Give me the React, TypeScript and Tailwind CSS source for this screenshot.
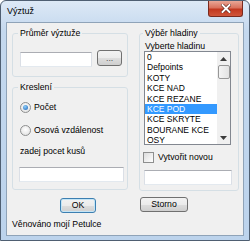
import type { ReactNode } from "react"

const layers = ["0", "Defpoints", "KOTY", "KCE NAD", "KCE REZANE", "KCE POD", "KCE SKRYTE", "BOURANE KCE", "OSY"]

function GroupBox({ title, className, children }: { title: string; className: string; children: ReactNode }) {
	return (
		<fieldset className={`border border-[#d5dfe5] rounded-[3px] min-w-0 ${className}`}>
			<legend className="px-[2px] leading-[10px]">{title}</legend>
			{children}
		</fieldset>
	)
}

function TextBox({ className }: { className: string }) {
	return <div className={`h-[15px] bg-white border border-t-[#abadb3] border-x-[#dbdfe6] border-b-[#e3e9ef] ${className}`} />
}

function Button({ label, className }: { label: string; className: string }) {
	return (
		<div
			className={`h-[15px] rounded-[3px] border flex items-center justify-center leading-none bg-[linear-gradient(#f2f2f2_0%,#ebebeb_50%,#dddddd_51%,#cfcfcf_100%)] ${className}`}
		>
			{label}
		</div>
	)
}

function Radio({ checked }: { checked?: boolean }) {
	return (
		<span className="w-[11px] h-[11px] rounded-full border border-[#8e8f8f] bg-[radial-gradient(circle_at_50%_40%,#ffffff,#dcdcdc)] flex items-center justify-center shrink-0">
			{checked && <span className="w-[5px] h-[5px] rounded-full bg-[radial-gradient(circle_at_40%_35%,#8fd0fa,#1a5fb4)]" />}
		</span>
	)
}

function Arrow({ down }: { down?: boolean }) {
	return (
		<div className="h-[13px] w-full flex items-center justify-center">
			<svg width="7" height="4" viewBox="0 0 7 4">
				<path d={down ? "M0 0 L7 0 L3.5 4Z" : "M0 4 L7 4 L3.5 0Z"} fill="#3c3c3c" />
			</svg>
		</div>
	)
}

export default function App() {
	return (
		<div className="w-[250px] h-[241px] flex flex-col border border-[#4f5f72] rounded-t-[6px] bg-[linear-gradient(#dde9f6,#c4d8ee_30px,#bcd3ec)] font-['Liberation_Sans',Arial,sans-serif] text-[8.7px] text-black overflow-hidden">
			<div className="h-[21px] flex justify-between shrink-0">
				<div className="pl-[6px] pt-[5px] text-[9px] leading-[11px]">Výztuž</div>
				<div className="mr-[6px] w-[35px] h-[16px] rounded-b-[3px] border border-t-0 border-[#7a2a1e] bg-[linear-gradient(#e9a796_0%,#d9725d_45%,#c2381f_55%,#d0563b_100%)] flex items-center justify-center">
					<svg width="10" height="9" viewBox="0 0 10 9">
						<path d="M1.5 1 L8.5 8 M8.5 1 L1.5 8" stroke="#5a1a10" strokeWidth="3.2" strokeLinecap="square" />
						<path d="M1.5 1 L8.5 8 M8.5 1 L1.5 8" stroke="#ffffff" strokeWidth="2" strokeLinecap="square" />
					</svg>
				</div>
			</div>

			<div className="flex-1 ml-[5px] mr-[5px] mb-[4px] border border-[#8fa3b8] bg-[#f0f0f0] flex gap-[11px] pl-[5px] pt-[5px]">
				<div className="w-[116px] flex flex-col">
					<GroupBox title="Průměr výztuže" className="px-[5px] pt-[12px] pb-[9px]">
						<div className="flex items-start gap-[5px]">
							<TextBox className="ml-[2px] mt-[2px] w-[73px]" />
							<Button label="..." className="w-[25px] h-[16px] border-[#707070] text-[#555]" />
						</div>
					</GroupBox>

					<GroupBox title="Kreslení" className="mt-[5px] px-[5px] pt-[9px] pb-[7px]">
						<div className="ml-[2px] h-[13px] flex items-center gap-[3px]">
							<Radio checked />
							<span>Počet</span>
						</div>
						<div className="ml-[2px] mt-[10px] h-[13px] flex items-center gap-[3px]">
							<Radio />
							<span>Osová vzdálenost</span>
						</div>
						<div className="ml-[2px] mt-[9px] leading-[10px]">zadej pocet kusů</div>
						<TextBox className="ml-[1px] mt-[11px] w-[105px]" />
					</GroupBox>

					<Button label="OK" className="ml-[48px] mt-[8px] w-[36px] border-[#3c7fb1] shadow-[inset_0_0_0_1px_#c4e5f6]" />
					<div className="mt-[6px] leading-[10px]">Věnováno mojí Petulce</div>
				</div>

				<div className="w-[100px] flex flex-col">
					<GroupBox title="Výběr hladiny" className="px-[3px] pb-[5px]">
						<div className="ml-[2px] mt-[3px] leading-[10px]">Vyberte hladinu</div>
						<div className="ml-[1px] w-[87px] h-[94px] border border-[#828790] bg-white flex">
							<div className="flex-1 overflow-hidden text-[8.5px]">
								{layers.map((layer) => (
									<div
										key={layer}
										className={layer === "KCE POD" ? "h-[10.4px] leading-[10.4px] pl-[2px] bg-[#3399ff] text-white" : "h-[10.4px] leading-[10.4px] pl-[2px]"}
									>
										{layer}
									</div>
								))}
							</div>
							<div className="w-[13px] bg-[#f0f0f0] flex flex-col items-center">
								<Arrow />
								<div className="w-[12px] h-[14px] rounded-[2px] border border-[#979797] bg-[linear-gradient(90deg,#f4f4f4,#e2e2e2)]" />
								<div className="flex-1" />
								<Arrow down />
							</div>
						</div>
						<div className="mt-[7px] h-[11px] flex items-center gap-[4px]">
							<span className="w-[11px] h-[11px] border border-[#8e8f8f] bg-[linear-gradient(135deg,#dcdcdc,#ffffff)] shrink-0" />
							<span>Vytvořit novou</span>
						</div>
						<TextBox className="ml-[1px] mt-[7px] w-[88px]" />
					</GroupBox>

					<Button label="Storno" className="ml-[1px] mt-[6px] w-[48px] border-[#707070]" />
				</div>
			</div>
		</div>
	)
}
